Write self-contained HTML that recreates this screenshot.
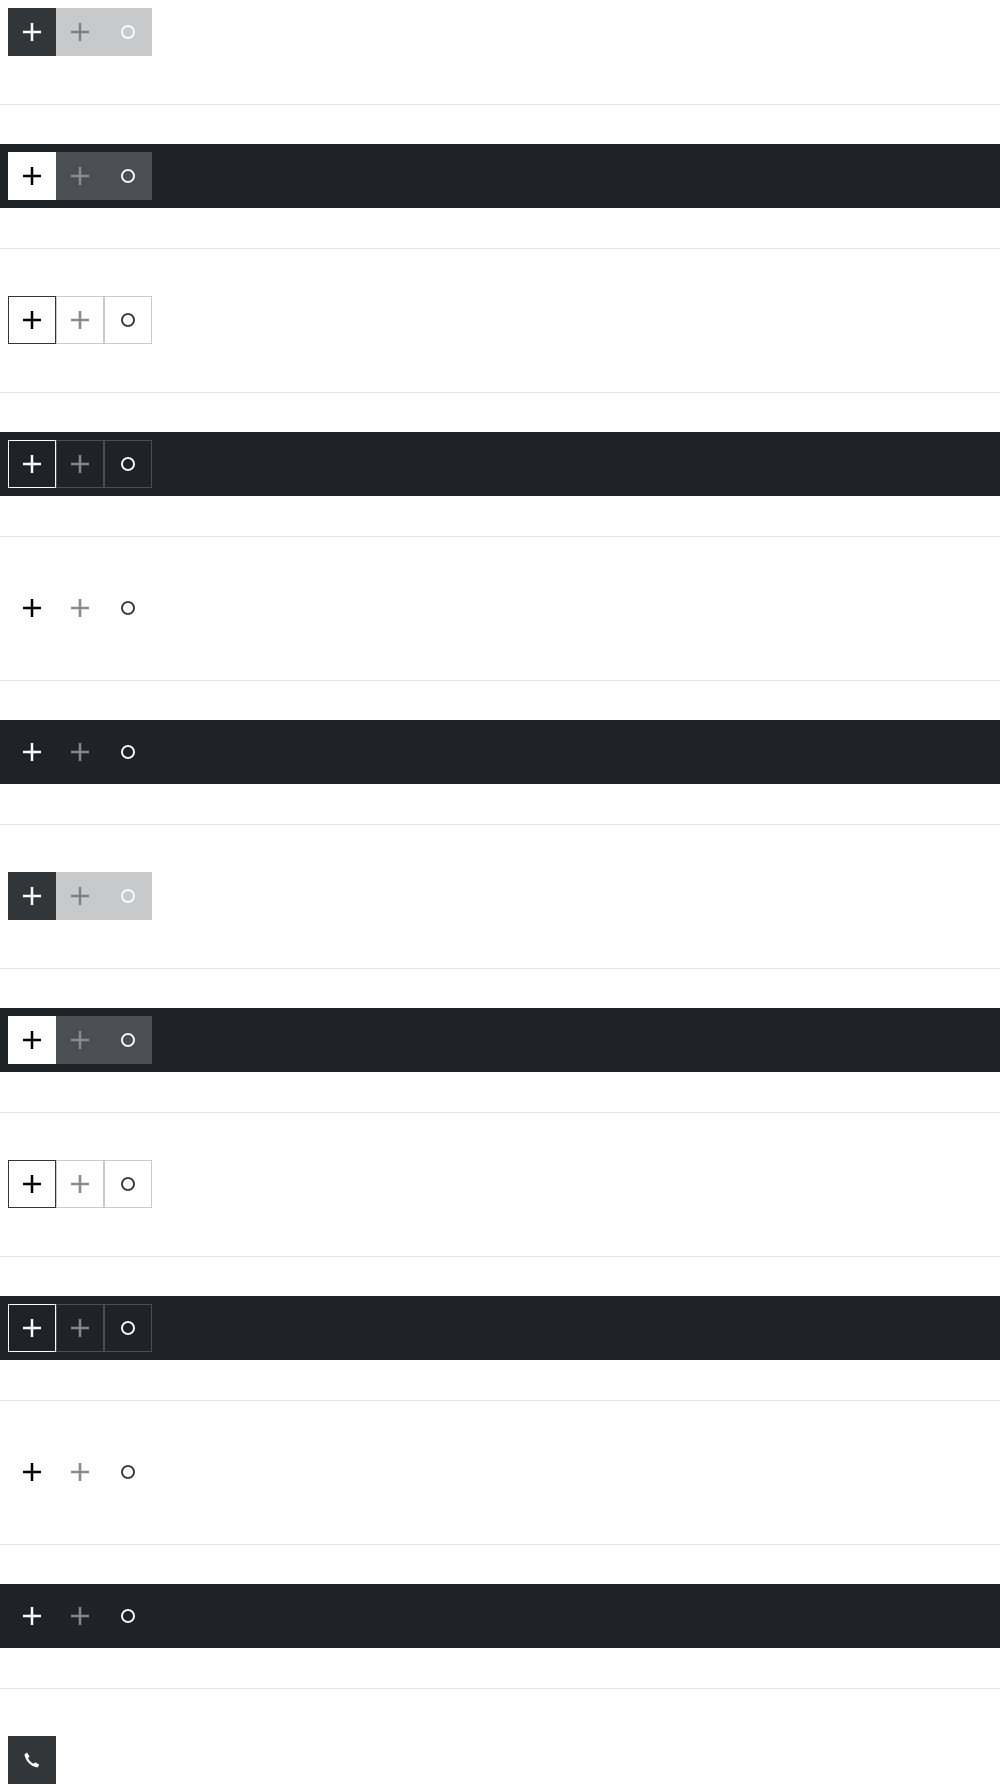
<!DOCTYPE html>
<html><head><meta charset="utf-8"><style>
*{margin:0;padding:0;box-sizing:border-box}
html,body{width:1000px;height:1792px;background:#fff;overflow:hidden;font-family:"Liberation Sans",sans-serif}
.blk{height:64px;padding:8px;display:flex}
.blk.dark{background:#1f2226}
hr{border:0;border-top:1px solid #e5e5e5;margin:40px 0 39px}
.b{width:48px;height:48px;position:relative;display:flex;align-items:center;justify-content:center}
.b svg{display:block}
.f1{background:#333639}.f2{background:#c8c9ca}
.d1{background:#fff}.d2{background:#4b4e52}
.o1{border:1px solid #333639}.o2{border:1px solid #c8c9ca}
.do1{border:1px solid #fff}.do2{border:1px solid #4b4e52}
</style></head><body>
<div id="c"></div>
<script>
function plus(c){return '<svg width="18" height="18" viewBox="0 0 18 18"><path d="M0 9H18M9 0V18" stroke="'+c+'" stroke-width="2.5"/></svg>';}
function circ(c){return '<svg width="16" height="16" viewBox="0 0 16 16"><circle cx="8" cy="8" r="6" fill="none" stroke="'+c+'" stroke-width="1.8"/></svg>';}
var variants=[
 {d:0,c:['f1','f2','f2'],p:['#fff','#7e7f80','#fff']},
 {d:1,c:['d1','d2','d2'],p:['#000','#8a8c8e','#fff']},
 {d:0,c:['o1','o2','o2'],p:['#000','#888','#333']},
 {d:1,c:['do1','do2','do2'],p:['#fff','#888','#fff']},
 {d:0,c:['','',''],p:['#000','#888','#333']},
 {d:1,c:['','',''],p:['#fff','#888','#fff']}
];
var h='';
for(var i=0;i<12;i++){
 var v=variants[i%6];
 h+='<div class="blk'+(v.d?' dark':'')+'">';
 h+='<div class="b '+v.c[0]+'">'+plus(v.p[0])+'</div>';
 h+='<div class="b '+v.c[1]+'">'+plus(v.p[1])+'</div>';
 h+='<div class="b '+v.c[2]+'">'+circ(v.p[2])+'</div>';
 h+='</div><hr>';
}
h+='<div class="blk"><div class="b f1"><svg width="20" height="20" viewBox="0 0 20 20"><path d="M2.5 4.5 L5 2.5 L7.5 6.5 L6 8 C7 10.5 9 12.5 11.8 13.8 L13.2 12.3 L17.3 14.8 L15.5 17.5 C9 16.5 3.5 11 2.5 4.5 Z" fill="#fff"/></svg></div></div>';
document.getElementById('c').innerHTML=h;
</script>
</body></html>
